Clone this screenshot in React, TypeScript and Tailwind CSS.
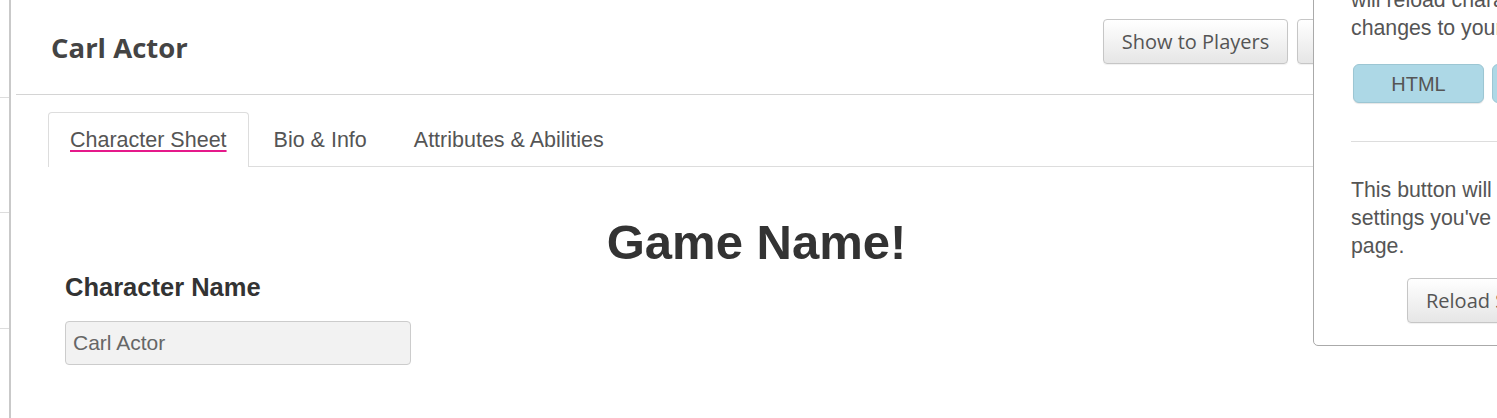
import type { ReactNode } from 'react'

function GrayButton({ children, className = '' }: { children: ReactNode; className?: string }) {
  return (
    <button
      type="button"
      className={`h-[45px] px-[17px] flex items-center justify-center shrink-0 whitespace-nowrap rounded-[4px] border border-[#c6c6c6] bg-gradient-to-b from-white to-[#e6e6e6] font-['Open_Sans',sans-serif] text-[20px] text-[#555] shadow-[0_1px_1px_rgba(0,0,0,0.06)] ${className}`}
    >
      {children}
    </button>
  )
}

export default function App() {
  const tabs = ['Character Sheet', 'Bio & Info', 'Attributes & Abilities']

  return (
    <div className="relative w-[1497px] h-[418px] overflow-hidden bg-white font-['Liberation_Sans',Arial,sans-serif]">
      <div className="flex h-full">
        {/* Sidebar edge */}
        <div className="w-[11px] shrink-0 border-r-2 border-[#c9c9c9]">
          <div className="h-[98px] border-b border-[#ddd]" />
          <div className="h-[115px] border-b border-[#ddd]" />
          <div className="h-[116px] border-b border-[#ddd]" />
        </div>

        <main className="flex-1 ml-[5px] min-w-0">
          {/* Header */}
          <header className="h-[95px] flex items-start border-b border-[#d4d4d4]">
            <h2 className="mt-[29px] ml-[35px] font-['Open_Sans',sans-serif] font-bold text-[27.5px] leading-[37px] text-[#444]">
              Carl Actor
            </h2>
            <div className="ml-auto mt-[19px] pr-[154px] flex gap-[9px]">
              <GrayButton className="w-[185px]">Show to Players</GrayButton>
              {/* settings button, mostly hidden under the popover */}
              <GrayButton className="w-[46px] px-0">
                <svg width="18" height="18" viewBox="0 0 24 24" fill="none" stroke="#666" strokeWidth="2">
                  <circle cx="12" cy="12" r="3" />
                  <path d="M12 2v3M12 19v3M2 12h3M19 12h3M4.9 4.9l2.1 2.1M17 17l2.1 2.1M4.9 19.1L7 17M17 7l2.1-2.1" />
                </svg>
              </GrayButton>
            </div>
          </header>

          {/* Tabs */}
          <div className="px-[32px] pt-[17px]">
            <div className="flex border-b border-[#ddd]">
              {tabs.map((tab, i) => (
                <div
                  key={tab}
                  className={`h-[55px] -mb-px px-[21px] flex items-center text-[21.5px] text-[#555] rounded-t-[4px] border border-b-0 ${
                    i === 0 ? 'border-[#ddd] bg-white' : 'border-transparent ml-[3px]'
                  }`}
                >
                  <span className={i === 0 ? 'underline decoration-[#e5198a] underline-offset-[3px]' : ''}>
                    {tab}
                  </span>
                </div>
              ))}
            </div>

            {/* Sheet content */}
            <div className="mt-[47px]">
              <h1 className="text-center text-[49px] leading-[56px] font-bold text-[#333]">Game Name!</h1>
              <h3 className="ml-[17px] mt-[2px] text-[25.5px] leading-[30px] font-bold text-[#333]">
                Character Name
              </h3>
              <input
                readOnly
                value="Carl Actor"
                className="block ml-[17px] mt-[19px] w-[346px] h-[44px] px-[7px] rounded-[4px] border border-[#ccc] bg-[#f2f2f2] text-[21px] text-[#666] outline-none font-['Liberation_Sans',Arial,sans-serif]"
              />
            </div>
          </div>
        </main>
      </div>

      {/* Settings popover */}
      <div className="absolute left-[1313px] top-[-50px] w-[400px] bg-white border border-[#aaa] rounded-bl-[5px] pl-[37px] pt-[7px] pb-[22px] text-[21.3px] leading-[28px] text-[#555]">
        <p className="whitespace-nowrap">
          Changing the sheet source
          <br />
          will reload character sheet and save
          <br />
          changes to your sheet settings.
        </p>
        <div className="mt-[22px] ml-[2px] flex gap-[8px]">
          <button
            type="button"
            className="w-[131px] h-[39px] rounded-[6px] border border-[#9cc6d3] bg-[#add8e6] text-[20px] text-[#555] shadow-[0_1px_1px_rgba(0,0,0,0.1)]"
          >
            HTML
          </button>
          <button
            type="button"
            className="w-[131px] h-[39px] rounded-[6px] border border-[#9cc6d3] bg-[#add8e6] text-[20px] text-[#555]"
          >
            CSS
          </button>
        </div>
        <div className="mt-[38px] h-px bg-[#ddd]" />
        <p className="mt-[34px] whitespace-nowrap">
          This button will reload the sheet with the
          <br />
          settings you've chosen above on this
          <br />
          page.
        </p>
        <div className="mt-[18px] ml-[56px] flex">
          <GrayButton className="px-[18px]">Reload Sheet</GrayButton>
        </div>
      </div>
    </div>
  )
}
